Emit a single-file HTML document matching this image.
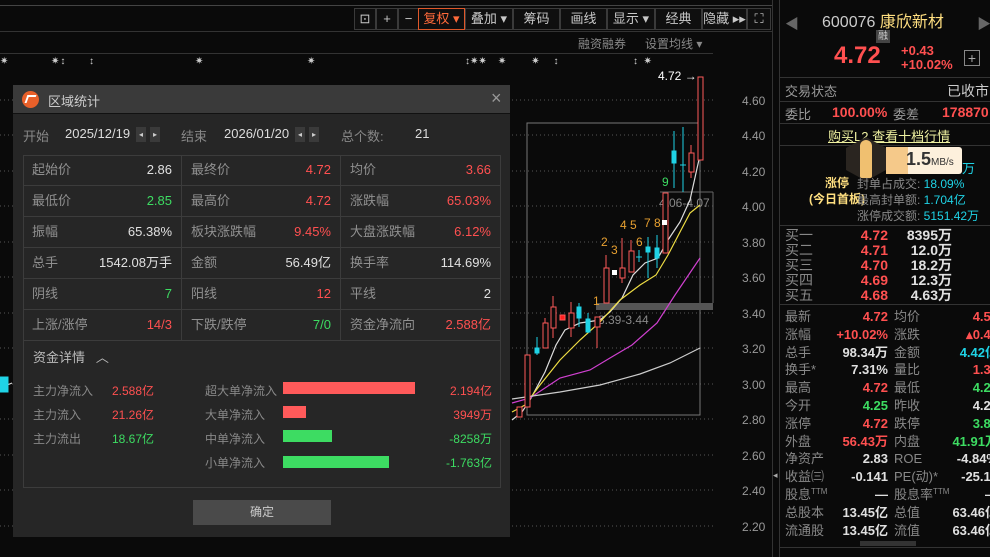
<!DOCTYPE html>
<html><head><meta charset="utf-8"><style>
*{margin:0;padding:0;box-sizing:border-box}
body{width:990px;height:557px;background:#0a0a0a;position:relative;overflow:hidden;font-family:"Liberation Sans","Noto Sans CJK SC",sans-serif;color:#c8c8c8}
.a{position:absolute;white-space:nowrap}
.r{color:#ff5050}.g{color:#3ddc62}.w{color:#e0e0e0}.c{color:#1fd3e6}.y{color:#ffdf80}
.tb{position:absolute;top:8px;height:22px;border:1px solid #3a3a3a;font-size:13px;color:#c8c8c8;text-align:center;line-height:20px;background:#0f0f0f}
.dlg{position:absolute;left:13px;top:85px;width:497px;height:452px;background:#262626}
.hd{position:absolute;left:0;top:0;width:497px;height:29px;background:#3a3a3a;border-bottom:1px solid #111}
.cell{position:absolute;height:31px;border-right:1px solid #3c3c3c;border-bottom:1px solid #3c3c3c;font-size:13px;line-height:30px}
.cell .l{position:absolute;left:9px;color:#909090}
.cell .v{position:absolute;right:9px}
.rp{position:absolute;font-size:14px;line-height:15px;font-weight:bold}
.sp{font-size:8px;line-height:0;position:relative;top:-5px}
</style></head><body>
<!-- top lines -->
<div class="a" style="left:0;top:5px;width:772px;height:1px;background:#444"></div>
<div class="a" style="left:0;top:31px;width:772px;height:1px;background:#333"></div>
<div class="a" style="left:0;top:53px;width:713px;height:1px;background:#333"></div>
<div class="a" style="left:772px;top:0;width:1px;height:557px;background:#333"></div>
<div class="a" style="left:779px;top:0;width:1px;height:557px;background:#333"></div>
<!-- toolbar -->
<div class="tb" style="left:354px;width:22px">⊡</div>
<div class="tb" style="left:376px;width:22px">+</div>
<div class="tb" style="left:398px;width:21px">−</div>
<div class="tb" style="left:418px;width:47px;border-color:#e0582a;color:#ff6a3a">复权 ▾</div>
<div class="tb" style="left:465px;width:48px">叠加 ▾</div>
<div class="tb" style="left:513px;width:47px">筹码</div>
<div class="tb" style="left:560px;width:47px">画线</div>
<div class="tb" style="left:607px;width:48px">显示 ▾</div>
<div class="tb" style="left:655px;width:47px">经典</div>
<div class="tb" style="left:702px;width:45px">隐藏 ▸▸</div>
<div class="tb" style="left:747px;width:24px">⛶</div>
<div class="a" style="left:578px;top:35px;font-size:12px;color:#888">融资融券</div>
<div class="a" style="left:645px;top:35px;font-size:12px;color:#888">设置均线 ▾</div>
<div class="a" style="left:0;top:56px;font-size:10px;color:#ccc;letter-spacing:1px">✷&nbsp;&nbsp;&nbsp;&nbsp;&nbsp;&nbsp;&nbsp;&nbsp;&nbsp;&nbsp;&nbsp;✷↕&nbsp;&nbsp;&nbsp;&nbsp;&nbsp;&nbsp;↕</div>
<div class="a" style="left:195px;top:56px;font-size:10px;color:#ccc">✷</div>
<div class="a" style="left:307px;top:56px;font-size:10px;color:#ccc">✷</div>
<div class="a" style="left:465px;top:56px;font-size:10px;color:#ccc">↕✷✷&nbsp;&nbsp;&nbsp;&nbsp;✷&nbsp;&nbsp;&nbsp;&nbsp;&nbsp;&nbsp;&nbsp;&nbsp;&nbsp;✷&nbsp;&nbsp;&nbsp;&nbsp;&nbsp;↕</div>
<div class="a" style="left:633px;top:56px;font-size:10px;color:#ccc">↕&nbsp;&nbsp;✷</div>
<!-- chart -->
<svg class="a" style="left:0;top:0" width="772" height="557">
<g stroke="#555" stroke-dasharray="1,3">
<line x1="0" y1="100" x2="713" y2="100"/><line x1="0" y1="135" x2="713" y2="135"/><line x1="0" y1="171" x2="713" y2="171"/><line x1="0" y1="206" x2="713" y2="206"/><line x1="0" y1="242" x2="713" y2="242"/><line x1="0" y1="277" x2="713" y2="277"/><line x1="0" y1="313" x2="713" y2="313"/><line x1="0" y1="348" x2="713" y2="348"/><line x1="0" y1="384" x2="713" y2="384"/><line x1="0" y1="419" x2="713" y2="419"/><line x1="0" y1="455" x2="713" y2="455"/><line x1="0" y1="490" x2="713" y2="490"/><line x1="0" y1="526" x2="713" y2="526"/>
</g>
<g font-size="12" fill="#999" font-family="Liberation Sans">
<text x="742" y="105">4.60</text><text x="742" y="140">4.40</text><text x="742" y="176">4.20</text><text x="742" y="211">4.00</text><text x="742" y="247">3.80</text><text x="742" y="282">3.60</text><text x="742" y="318">3.40</text><text x="742" y="353">3.20</text><text x="742" y="389">3.00</text><text x="742" y="424">2.80</text><text x="742" y="460">2.60</text><text x="742" y="495">2.40</text><text x="742" y="531">2.20</text>
</g>
<rect x="527" y="123" width="173" height="292" fill="none" stroke="#777"/>
<rect x="596" y="303" width="117" height="7" fill="#555"/>
<line x1="660" y1="192" x2="713" y2="192" stroke="#666"/>
<line x1="713" y1="192" x2="713" y2="303" stroke="#666"/>
<text x="598" y="324" font-size="12" fill="#888">3.39-3.44</text>
<text x="659" y="207" font-size="12" fill="#888">4.06-4.07</text>
<g fill="none" stroke-width="1.2">
<polyline stroke="#ddd" points="512,420 522,412 530,400 545,372 556,345 565,330 580,323 600,320 610,312 622,298 633,275 645,263 658,258 668,240 680,222 690,200 700,155"/>
<polyline stroke="#eedd44" points="512,412 525,405 540,385 560,360 580,340 600,322 620,300 640,285 656,275 668,255 680,232 690,213 700,205"/>
<polyline stroke="#d040d0" points="512,403 530,398 560,378 590,370 610,358 632,345 657,323 675,295 700,258"/>
<polyline stroke="#ccc" points="512,399 560,392 600,385 640,374 670,363 700,348"/>
<polyline stroke="#ddd" points="0,388 12,383"/>
</g>
<g stroke="#ff5a5a" fill="#0a0a0a">
<rect x="517" y="407" width="5" height="10"/>
<rect x="525" y="355" width="5" height="52"/>
<line x1="545" y1="318" x2="545" y2="323"/><rect x="543" y="323" width="5" height="25"/>
<line x1="553" y1="296" x2="553" y2="338"/><rect x="551" y="307" width="5" height="21"/>
<rect x="560" y="315" width="5" height="5" fill="#ff2020"/>
<line x1="571" y1="302" x2="571" y2="337"/><rect x="569" y="313" width="5" height="15"/>
<line x1="597" y1="317" x2="597" y2="348"/><rect x="595" y="317" width="5" height="10"/>
<line x1="606" y1="255" x2="606" y2="268"/><rect x="604" y="268" width="5" height="35"/>
<line x1="622" y1="238" x2="622" y2="283"/><rect x="620" y="268" width="5" height="10"/>
<line x1="631" y1="240" x2="631" y2="251"/><rect x="629" y="251" width="5" height="21"/>
<rect x="663" y="193" width="5" height="60"/>
<line x1="691" y1="145" x2="691" y2="178"/><rect x="689" y="153" width="5" height="19"/>
<rect x="698" y="77" width="5" height="83"/>
</g>
<g fill="#1fd3e6" stroke="#1fd3e6">
<line x1="537" y1="337" x2="537" y2="355"/><rect x="535" y="348" width="4" height="5"/>
<line x1="579" y1="303" x2="579" y2="327"/><rect x="577" y="307" width="4" height="11"/>
<line x1="588" y1="313" x2="588" y2="333"/><rect x="586" y="319" width="4" height="13"/>
<line x1="639" y1="250" x2="639" y2="262"/><line x1="636" y1="257" x2="642" y2="257"/>
<line x1="648" y1="237" x2="648" y2="278"/><rect x="646" y="247" width="4" height="5"/>
<line x1="657" y1="235" x2="657" y2="268"/><rect x="655" y="248" width="4" height="10"/>
<line x1="674" y1="131" x2="674" y2="188"/><rect x="672" y="151" width="4" height="12"/>
<line x1="683" y1="127" x2="683" y2="192"/><line x1="680" y1="165" x2="686" y2="165"/>
<rect x="0" y="377" width="8" height="15"/>
</g>
<rect x="612" y="270" width="5" height="5" fill="#fff"/><rect x="662" y="220" width="5" height="5" fill="#fff"/>
<g font-size="12" fill="#e8a030" font-family="Liberation Sans">
<text x="593" y="305">1</text><text x="601" y="246">2</text><text x="611" y="254">3</text><text x="620" y="229">4 5</text><text x="636" y="246">6</text><text x="644" y="227">7 8</text></g>
<text x="662" y="186" font-size="12" fill="#3ddc62">9</text>
<text x="658" y="80" font-size="12" fill="#fff">4.72 →</text>
</svg>
<!-- dialog -->
<div class="dlg">
<div class="hd"><div class="a" style="left:9px;top:6px;width:17px;height:17px;border-radius:50%;background:#e8602a"></div>
<div class="a" style="left:13px;top:10px;width:9px;height:8px;border-top:2px solid #fff;border-left:2px solid #fff;transform:skewX(-20deg)"></div>
<div class="a" style="left:35px;top:6px;font-size:13px;color:#ccc">区域统计</div>
<div class="a" style="left:478px;top:3px;font-size:18px;color:#999">×</div></div>
<div class="a" style="left:10px;top:41px;font-size:13px;color:#888">开始</div>
<div class="a" style="left:52px;top:41px;font-size:13px;color:#ddd">2025/12/19</div>
<div class="a" style="left:123px;top:42px;width:10px;height:15px;background:#3a3a3a;font-size:8px;color:#ccc;text-align:center;line-height:15px">◂</div>
<div class="a" style="left:137px;top:42px;width:10px;height:15px;background:#3a3a3a;font-size:8px;color:#ccc;text-align:center;line-height:15px">▸</div>
<div class="a" style="left:168px;top:41px;font-size:13px;color:#888">结束</div>
<div class="a" style="left:211px;top:41px;font-size:13px;color:#ddd">2026/01/20</div>
<div class="a" style="left:282px;top:42px;width:10px;height:15px;background:#3a3a3a;font-size:8px;color:#ccc;text-align:center;line-height:15px">◂</div>
<div class="a" style="left:296px;top:42px;width:10px;height:15px;background:#3a3a3a;font-size:8px;color:#ccc;text-align:center;line-height:15px">▸</div>
<div class="a" style="left:328px;top:41px;font-size:13px;color:#888">总个数:</div>
<div class="a" style="left:402px;top:41px;font-size:13px;color:#ddd">21</div>
<div class="a" style="left:10px;top:70px;width:478px;height:333px;border:1px solid #3c3c3c"></div>
<div class="a" style="left:10px;top:70px">
<div class="cell" style="left:0;top:0;width:159px"><span class="l">起始价</span><span class="v w">2.86</span></div>
<div class="cell" style="left:159px;top:0;width:159px"><span class="l">最终价</span><span class="v r">4.72</span></div>
<div class="cell" style="left:318px;top:0;width:159px;border-right:0"><span class="l">均价</span><span class="v r">3.66</span></div>
<div class="cell" style="left:0;top:31px;width:159px"><span class="l">最低价</span><span class="v g">2.85</span></div>
<div class="cell" style="left:159px;top:31px;width:159px"><span class="l">最高价</span><span class="v r">4.72</span></div>
<div class="cell" style="left:318px;top:31px;width:159px;border-right:0"><span class="l">涨跌幅</span><span class="v r">65.03%</span></div>
<div class="cell" style="left:0;top:62px;width:159px"><span class="l">振幅</span><span class="v w">65.38%</span></div>
<div class="cell" style="left:159px;top:62px;width:159px"><span class="l">板块涨跌幅</span><span class="v r">9.45%</span></div>
<div class="cell" style="left:318px;top:62px;width:159px;border-right:0"><span class="l">大盘涨跌幅</span><span class="v r">6.12%</span></div>
<div class="cell" style="left:0;top:93px;width:159px"><span class="l">总手</span><span class="v w">1542.08万手</span></div>
<div class="cell" style="left:159px;top:93px;width:159px"><span class="l">金额</span><span class="v w">56.49亿</span></div>
<div class="cell" style="left:318px;top:93px;width:159px;border-right:0"><span class="l">换手率</span><span class="v w">114.69%</span></div>
<div class="cell" style="left:0;top:124px;width:159px"><span class="l">阴线</span><span class="v g">7</span></div>
<div class="cell" style="left:159px;top:124px;width:159px"><span class="l">阳线</span><span class="v r">12</span></div>
<div class="cell" style="left:318px;top:124px;width:159px;border-right:0"><span class="l">平线</span><span class="v w">2</span></div>
<div class="cell" style="left:0;top:155px;width:159px"><span class="l">上涨/涨停</span><span class="v r">14/3</span></div>
<div class="cell" style="left:159px;top:155px;width:159px"><span class="l">下跌/跌停</span><span class="v g">7/0</span></div>
<div class="cell" style="left:318px;top:155px;width:159px;border-right:0"><span class="l">资金净流向</span><span class="v r">2.588亿</span></div>
</div>
<div class="a" style="left:20px;top:262px;font-size:13px;color:#bbb">资金详情 &nbsp; ︿</div>
<div class="a" style="left:20px;top:294px;font-size:12px;color:#888;line-height:24px">主力净流入<br>主力流入<br>主力流出</div>
<div class="a" style="left:99px;top:294px;font-size:12px;line-height:24px"><span class="r">2.588亿</span><br><span class="r">21.26亿</span><br><span class="g">18.67亿</span></div>
<div class="a" style="left:192px;top:294px;font-size:12px;color:#888;line-height:24px">超大单净流入<br>大单净流入<br>中单净流入<br>小单净流入</div>
<div class="a" style="left:270px;top:297px;width:132px;height:12px;background:#ff5a5a"></div>
<div class="a" style="left:270px;top:321px;width:23px;height:12px;background:#ff5a5a"></div>
<div class="a" style="left:270px;top:345px;width:49px;height:12px;background:#3ddc62"></div>
<div class="a" style="left:270px;top:371px;width:106px;height:12px;background:#3ddc62"></div>
<div class="a" style="right:18px;top:294px;font-size:12px;line-height:24px;text-align:right"><span class="r">2.194亿</span><br><span class="r">3949万</span><br><span class="g">-8258万</span><br><span class="g">-1.763亿</span></div>
<div class="a" style="left:180px;top:415px;width:138px;height:25px;background:#4a4a4a;font-size:12px;color:#ccc;text-align:center;line-height:25px">确定</div>
</div>
<!-- right panel -->
<div class="a" style="left:785px;top:14px;font-size:14px;color:#666">◀</div>
<div class="a" style="left:822px;top:8px;font-size:16px;color:#ccc">600076 <span class="y">康欣新材</span></div>
<div class="a" style="left:977px;top:14px;font-size:14px;color:#666">▶</div>
<div class="a" style="left:876px;top:30px;width:14px;height:13px;background:#444;font-size:10px;color:#ccc;text-align:center;line-height:13px">融</div>
<div class="a r" style="left:834px;top:42px;font-size:24px;font-weight:bold">4.72</div>
<div class="a r" style="left:901px;top:44px;font-size:13px;font-weight:bold;line-height:14px">+0.43<br>+10.02%</div>
<div class="a" style="left:964px;top:50px;width:16px;height:16px;border:1px solid #888;color:#aaa;font-size:14px;text-align:center;line-height:14px">+</div>
<div class="a" style="left:780px;top:77px;width:210px;height:1px;background:#333"></div>
<div class="a" style="left:785px;top:81px;font-size:13px;color:#999">交易状态</div>
<div class="a" style="left:947px;top:81px;font-size:14px;color:#ccc">已收市</div>
<div class="a" style="left:780px;top:101px;width:210px;height:1px;background:#333"></div>
<div class="a" style="left:785px;top:104px;font-size:13px;color:#999">委比</div>
<div class="a r" style="left:832px;top:104px;font-size:14px;font-weight:bold">100.00%</div>
<div class="a" style="left:893px;top:104px;font-size:13px;color:#999">委差</div>
<div class="a r" style="left:942px;top:104px;font-size:14px;font-weight:bold">178870</div>
<div class="a" style="left:780px;top:123px;width:210px;height:1px;background:#333"></div>
<div class="a" style="left:828px;top:126px;font-size:13px;color:#eef0a0;text-decoration:underline">购买L2 查看十档行情</div>
<div class="a" style="left:780px;top:145px;width:210px;height:1px;background:#333"></div>
<div class="a" style="left:846px;top:137px;width:40px;height:44px;background:#2a2520;clip-path:polygon(50% 0,100% 25%,100% 75%,50% 100%,0 75%,0 25%)"></div>
<div class="a" style="left:860px;top:140px;width:12px;height:38px;background:#f0c070;border-radius:6px 6px 2px 2px"></div>
<div class="a" style="left:886px;top:147px;width:76px;height:27px;background:#fdf0dc;border-radius:3px"></div>
<div class="a" style="left:886px;top:147px;width:22px;height:27px;background:#f5c98a"></div>
<div class="a" style="left:906px;top:149px;font-size:18px;font-weight:bold;color:#333">1.5<span style="font-size:10px;font-weight:normal">MB/s</span></div>
<div class="a c" style="left:962px;top:158px;font-size:13px">万</div>
<div class="a y" style="left:809px;top:175px;font-size:12px;font-weight:bold;text-align:center;line-height:16px">涨停<br>(今日首板)</div>
<div class="a" style="left:857px;top:176px;font-size:12px;line-height:16px;color:#888">封单占成交: <span class="c">18.09%</span><br>最高封单额: <span class="c">1.704亿</span><br>涨停成交额: <span class="c">5151.42万</span></div>
<div class="a" style="left:780px;top:225px;width:210px;height:1px;background:#333"></div>
<div class="rp" style="left:785px;top:228px;color:#888;font-weight:normal">买一<br>买二<br>买三<br>买四<br>买五</div>
<div class="rp r" style="left:860px;top:228px;text-align:right;width:28px">4.72<br>4.71<br>4.70<br>4.69<br>4.68</div>
<div class="rp w" style="left:900px;top:228px;text-align:right;width:52px">8395万<br>12.0万<br>18.2万<br>12.3万<br>4.63万</div>
<div class="a" style="left:780px;top:304px;width:210px;height:1px;background:#333"></div>
<div class="rp" style="left:785px;top:308px;color:#888;font-weight:normal;line-height:17.8px;font-size:13px">最新<br>涨幅<br>总手<br>换手*<br>最高<br>今开<br>涨停<br>外盘<br>净资产<br>收益㈢<br>股息<span class="sp">TTM</span><br>总股本<br>流通股</div>
<div class="rp" style="left:820px;top:308px;width:68px;text-align:right;line-height:17.8px;font-size:13px"><span class="r">4.72</span><br><span class="r">+10.02%</span><br><span class="w">98.34万</span><br><span class="w">7.31%</span><br><span class="r">4.72</span><br><span class="g">4.25</span><br><span class="r">4.72</span><br><span class="r">56.43万</span><br><span class="w">2.83</span><br><span class="w">-0.141</span><br><span class="w">—</span><br><span class="w">13.45亿</span><br><span class="w">13.45亿</span></div>
<div class="rp" style="left:894px;top:308px;color:#888;font-weight:normal;line-height:17.8px;font-size:13px">均价<br>涨跌<br>金额<br>量比<br>最低<br>昨收<br>跌停<br>内盘<br>ROE<br>PE(动)*<br>股息率<span class="sp">TTM</span><br>总值<br>流值</div>
<div class="rp" style="left:930px;top:308px;width:68px;text-align:right;line-height:17.8px;font-size:13px"><span class="r">4.50</span><br><span class="r">▴0.43</span><br><span class="c">4.42亿</span><br><span class="r">1.35</span><br><span class="g">4.23</span><br><span class="w">4.29</span><br><span class="g">3.86</span><br><span class="g">41.91万</span><br><span class="w">-4.84%</span><br><span class="w">-25.13</span><br><span class="w">—</span><br><span class="w">63.46亿</span><br><span class="w">63.46亿</span></div>
<div class="a" style="left:860px;top:541px;width:56px;height:5px;background:#333"></div>
<div class="a" style="left:780px;top:547px;width:210px;height:1px;background:#333"></div>
<div class="a" style="left:773px;top:470px;font-size:9px;color:#aaa">◂</div>
</body></html>
